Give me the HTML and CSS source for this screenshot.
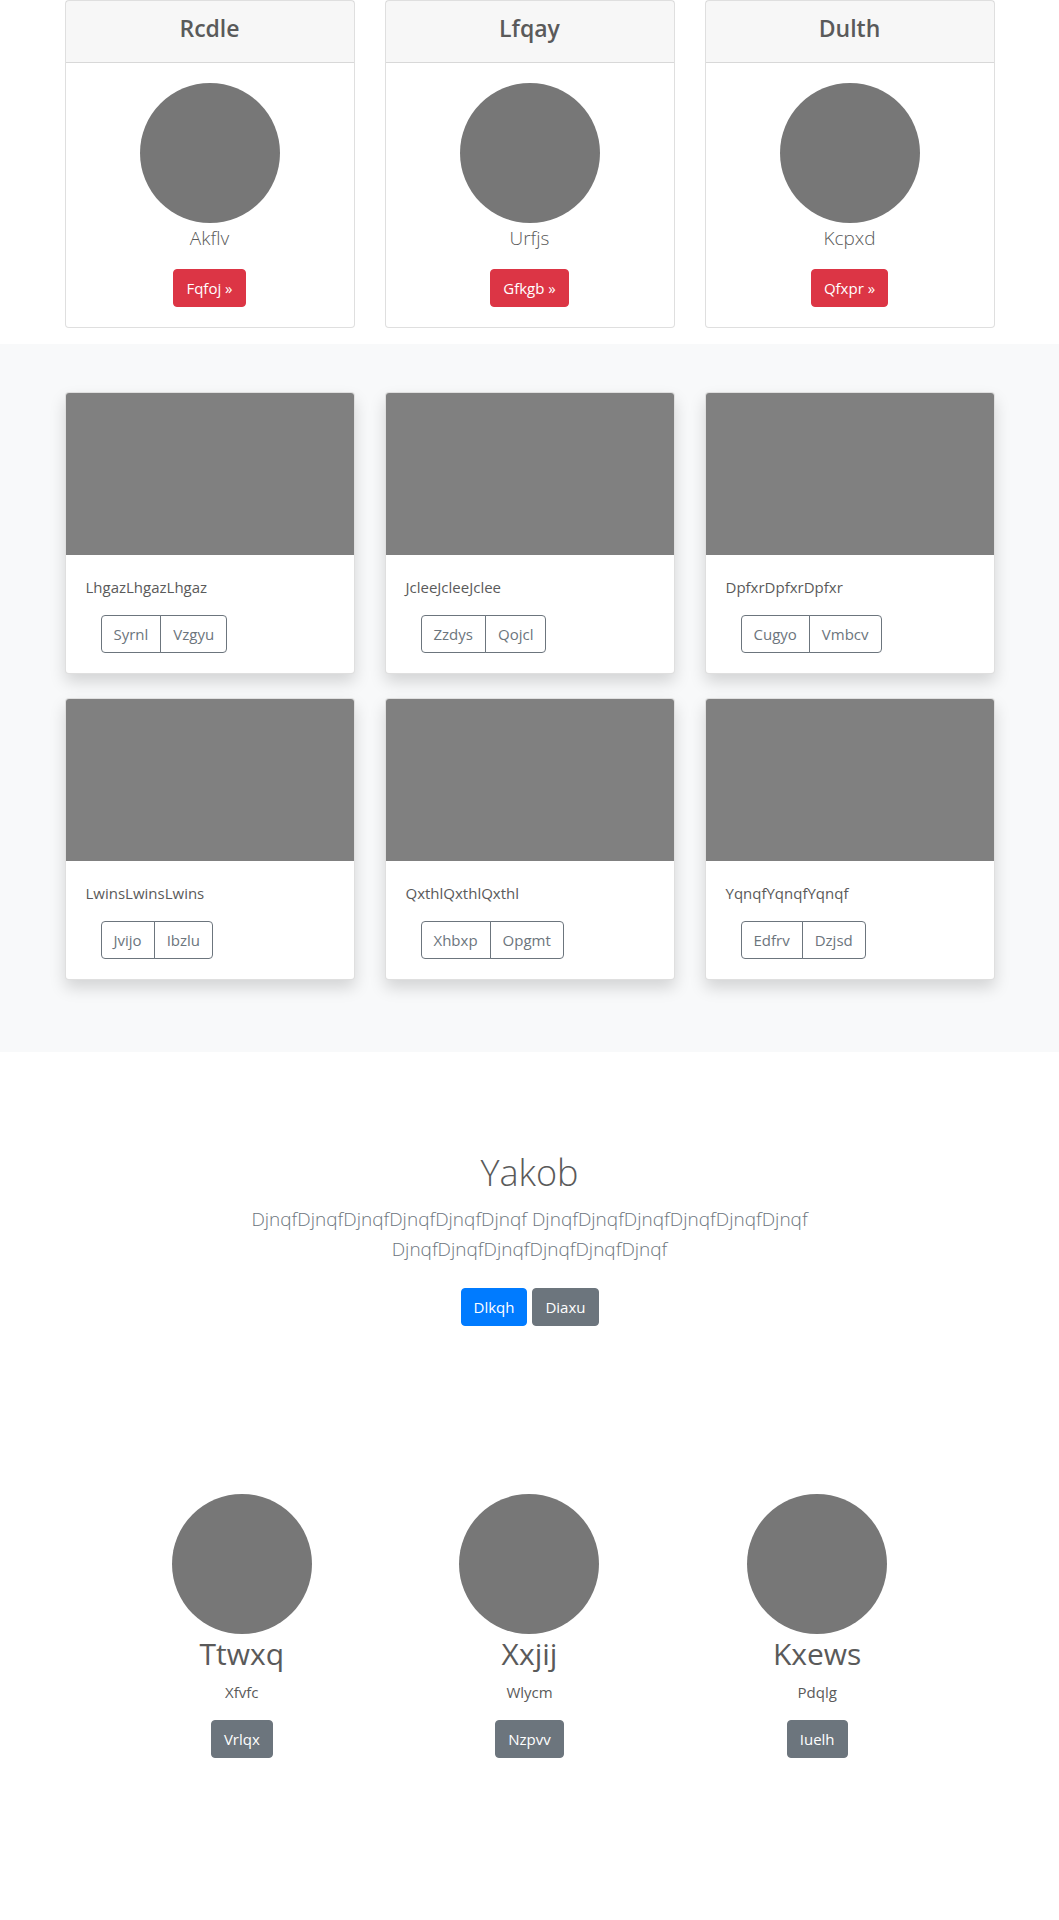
FILE: index.html
```html
<!DOCTYPE html>
<html lang="en">
<head>
<meta charset="utf-8">
<meta name="viewport" content="width=device-width, initial-scale=1">
<title>Yakob</title>
<link rel="stylesheet" href="styles.css">
</head>
<body>
<main>
  <section class="container deck">
    <article class="card">
      <header class="card-header"><h4>Rcdle</h4></header>
      <div class="card-body">
        <div class="circle"></div>
        <p class="lead">Akflv</p>
        <a class="btn btn-danger" href="#">Fqfoj »</a>
      </div>
    </article>
    <article class="card">
      <header class="card-header"><h4>Lfqay</h4></header>
      <div class="card-body">
        <div class="circle"></div>
        <p class="lead">Urfjs</p>
        <a class="btn btn-danger" href="#">Gfkgb »</a>
      </div>
    </article>
    <article class="card">
      <header class="card-header"><h4>Dulth</h4></header>
      <div class="card-body">
        <div class="circle"></div>
        <p class="lead">Kcpxd</p>
        <a class="btn btn-danger" href="#">Qfxpr »</a>
      </div>
    </article>
  </section>

  <section class="album">
    <div class="container album-grid">
      <article class="card tile">
        <div class="thumb"></div>
        <div class="tile-body">
          <p>LhgazLhgazLhgaz</p>
          <div class="btn-group"><button type="button" class="btn">Syrnl</button><button type="button" class="btn">Vzgyu</button></div>
        </div>
      </article>
      <article class="card tile">
        <div class="thumb"></div>
        <div class="tile-body">
          <p>JcleeJcleeJclee</p>
          <div class="btn-group"><button type="button" class="btn">Zzdys</button><button type="button" class="btn">Qojcl</button></div>
        </div>
      </article>
      <article class="card tile">
        <div class="thumb"></div>
        <div class="tile-body">
          <p>DpfxrDpfxrDpfxr</p>
          <div class="btn-group"><button type="button" class="btn">Cugyo</button><button type="button" class="btn">Vmbcv</button></div>
        </div>
      </article>
      <article class="card tile">
        <div class="thumb"></div>
        <div class="tile-body">
          <p>LwinsLwinsLwins</p>
          <div class="btn-group"><button type="button" class="btn">Jvijo</button><button type="button" class="btn">Ibzlu</button></div>
        </div>
      </article>
      <article class="card tile">
        <div class="thumb"></div>
        <div class="tile-body">
          <p>QxthlQxthlQxthl</p>
          <div class="btn-group"><button type="button" class="btn">Xhbxp</button><button type="button" class="btn">Opgmt</button></div>
        </div>
      </article>
      <article class="card tile">
        <div class="thumb"></div>
        <div class="tile-body">
          <p>YqnqfYqnqfYqnqf</p>
          <div class="btn-group"><button type="button" class="btn">Edfrv</button><button type="button" class="btn">Dzjsd</button></div>
        </div>
      </article>
    </div>
  </section>

  <section class="hero">
    <h1>Yakob</h1>
    <p class="lead">DjnqfDjnqfDjnqfDjnqfDjnqfDjnqf DjnqfDjnqfDjnqfDjnqfDjnqfDjnqf DjnqfDjnqfDjnqfDjnqfDjnqfDjnqf</p>
    <div class="actions">
      <a class="btn btn-primary" href="#">Dlkqh</a>
      <a class="btn btn-secondary" href="#">Diaxu</a>
    </div>
  </section>

  <section class="features">
    <article class="feature">
      <div class="circle"></div>
      <h2>Ttwxq</h2>
      <p>Xfvfc</p>
      <a class="btn btn-secondary" href="#">Vrlqx</a>
    </article>
    <article class="feature">
      <div class="circle"></div>
      <h2>Xxjij</h2>
      <p>Wlycm</p>
      <a class="btn btn-secondary" href="#">Nzpvv</a>
    </article>
    <article class="feature">
      <div class="circle"></div>
      <h2>Kxews</h2>
      <p>Pdqlg</p>
      <a class="btn btn-secondary" href="#">Iuelh</a>
    </article>
  </section>
</main>
</body>
</html>
```
FILE: styles.css
```css
*, *::before, *::after { box-sizing: border-box; }

body {
  margin: 0;
  background: #fff;
  color: #5a5a5a;
  font-family: "Segoe UI", "Open Sans", "Noto Sans", sans-serif;
  font-size: 15px;
  line-height: 24px;
}

h1, h2, h4, p { margin: 0; }

.container {
  max-width: 960px;
  margin: 0 auto;
  padding: 0 15px;
}

.card {
  background: #fff;
  border: 1px solid rgba(0, 0, 0, .125);
  border-radius: 4px;
}

.circle {
  width: 140px;
  height: 140px;
  border-radius: 50%;
  background: #777;
}

.lead {
  font-size: 19px;
  font-weight: 300;
  line-height: 30px;
}

.btn {
  display: inline-block;
  padding: 6px 12px;
  border: 1px solid transparent;
  border-radius: 4px;
  background: transparent;
  color: #fff;
  font: inherit;
  text-decoration: none;
  cursor: pointer;
}

.btn-danger { background: #dc3545; border-color: #dc3545; }
.btn-primary { background: #007bff; border-color: #007bff; }
.btn-secondary { background: #6c757d; border-color: #6c757d; }

/* Profile cards */
.deck {
  display: grid;
  grid-template-columns: repeat(3, 1fr);
  gap: 30px;
  margin-bottom: 16px;
}

.card-header {
  padding: 12px 20px 18px;
  border-bottom: 1px solid rgba(0, 0, 0, .125);
  background: rgba(0, 0, 0, .03);
  text-align: center;
}

.card-header h4 {
  font-size: 23px;
  font-weight: 600;
  line-height: 31px;
}

.card-body {
  display: flex;
  flex-direction: column;
  align-items: center;
  padding: 20px;
}

.card-body .lead { margin-bottom: 16px; }

/* Album */
.album {
  padding: 48px 0 72px;
  background: #f8f9fa;
}

.album-grid {
  display: grid;
  grid-template-columns: repeat(3, 1fr);
  gap: 24px 30px;
}

.tile {
  overflow: hidden;
  box-shadow: 0 8px 16px rgba(0, 0, 0, .15);
}

.thumb {
  height: 162px;
  background: #808080;
}

.tile-body { padding: 20px; }
.tile-body p { margin-bottom: 16px; }

.btn-group {
  display: flex;
  padding-left: 15px;
}

.btn-group .btn {
  border-color: #6c757d;
  color: #6c757d;
}

.btn-group .btn:first-child { border-radius: 4px 0 0 4px; }

.btn-group .btn:last-child {
  margin-left: -1px;
  border-radius: 0 4px 4px 0;
}

/* Hero */
.hero {
  max-width: 640px;
  margin: 0 auto;
  padding: 96px 15px 120px;
  text-align: center;
}

.hero h1 {
  margin-bottom: 6px;
  font-size: 36px;
  font-weight: 300;
  line-height: 50px;
}

.hero .lead {
  margin-bottom: 24px;
  color: #6c757d;
}

.actions {
  display: flex;
  justify-content: center;
  gap: 5px;
}

/* Features */
.features {
  display: grid;
  grid-template-columns: repeat(3, 1fr);
  max-width: 863px;
  margin: 0 auto;
  padding: 48px 0 160px;
}

.feature {
  display: flex;
  flex-direction: column;
  align-items: center;
}

.feature h2 {
  margin-bottom: 6px;
  font-size: 30px;
  font-weight: 400;
  line-height: 40px;
}

.feature p { margin-bottom: 16px; }
```
